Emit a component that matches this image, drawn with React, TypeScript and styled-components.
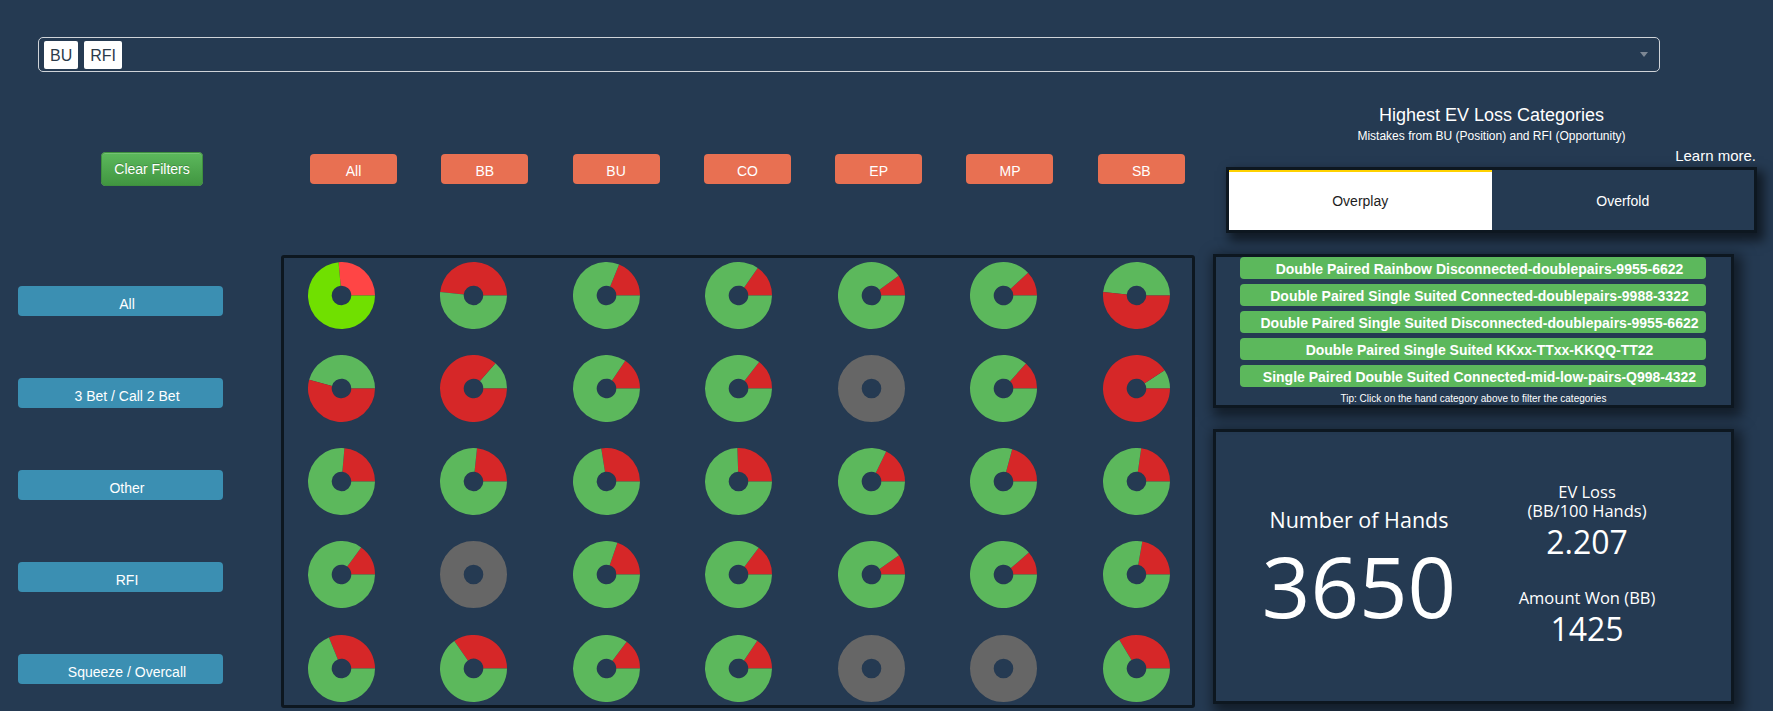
import React from "react";
import styled, { createGlobalStyle } from "styled-components";

const RED = "#d62728";
const GREEN = "#5cb85c";
const GRAY = "#666666";
const LIGHT_RED = "#ff4545";
const LIME = "#70e000";

type Pie = { kind: "r" | "g" | "x" | "l"; t: number };

// t = angle (deg, counter-clockwise from 3 o'clock) where the first slice ends
const pies: Pie[][] = [
  [{ kind: "l", t: 95 }, { kind: "r", t: 174 }, { kind: "r", t: 68 }, { kind: "r", t: 55 }, { kind: "r", t: 36 }, { kind: "r", t: 43 }, { kind: "g", t: 174 }],
  [{ kind: "g", t: 165 }, { kind: "g", t: 49 }, { kind: "r", t: 56 }, { kind: "r", t: 52 }, { kind: "x", t: 0 }, { kind: "r", t: 48 }, { kind: "g", t: 33 }],
  [{ kind: "r", t: 85 }, { kind: "r", t: 84 }, { kind: "r", t: 99 }, { kind: "r", t: 92 }, { kind: "r", t: 64 }, { kind: "r", t: 75 }, { kind: "r", t: 82 }],
  [{ kind: "r", t: 54 }, { kind: "x", t: 0 }, { kind: "r", t: 71 }, { kind: "r", t: 53 }, { kind: "r", t: 35 }, { kind: "r", t: 41 }, { kind: "r", t: 80 }],
  [{ kind: "r", t: 112 }, { kind: "r", t: 125 }, { kind: "r", t: 53 }, { kind: "r", t: 56 }, { kind: "x", t: 0 }, { kind: "x", t: 0 }, { kind: "r", t: 121 }],
];

const positions = ["All", "BB", "BU", "CO", "EP", "MP", "SB"];
const actions = ["All", "3 Bet / Call 2 Bet", "Other", "RFI", "Squeeze / Overcall"];
const categories = [
  "Double Paired Rainbow Disconnected-doublepairs-9955-6622",
  "Double Paired Single Suited Connected-doublepairs-9988-3322",
  "Double Paired Single Suited Disconnected-doublepairs-9955-6622",
  "Double Paired Single Suited KKxx-TTxx-KKQQ-TT22",
  "Single Paired Double Suited Connected-mid-low-pairs-Q998-4322",
];

const GlobalStyle = createGlobalStyle`
  html, body {
    margin: 0;
    padding: 0;
    background: #253a52;
  }
  body {
    font-family: "Liberation Sans", Arial, sans-serif;
    color: #fff;
  }
  * {
    box-sizing: border-box;
  }
`;

const Page = styled.div`
  width: 1773px;
  height: 711px;
  padding-top: 37px;
  overflow: hidden;
`;

const SelectBox = styled.div`
  margin-left: 38px;
  width: 1622px;
  height: 35px;
  border: 1px solid #cfd3d8;
  border-radius: 5px;
  display: flex;
  align-items: center;
  gap: 6px;
  padding-left: 5px;
`;

const Tag = styled.span`
  height: 28px;
  padding: 0 6px;
  background: #fff;
  color: #2b3a4a;
  border-radius: 2px;
  font-size: 16px;
  line-height: 29px;
`;

const Caret = styled.span`
  margin-left: auto;
  margin-right: 11px;
  width: 0;
  height: 0;
  border-left: 4px solid transparent;
  border-right: 4px solid transparent;
  border-top: 5px solid #7d8794;
`;

const Main = styled.div`
  display: flex;
  margin-top: 32px;
`;

const LeftPane = styled.div`
  display: grid;
  grid-template-columns: 281px 914px;
  grid-template-rows: 34px auto;
  row-gap: 69px;
  padding-top: 48px;
`;

const ClearButton = styled.button`
  margin-left: 101px;
  width: 102px;
  height: 34px;
  border: 1px solid #3e8f3e;
  border-radius: 4px;
  background-image: linear-gradient(to bottom, #5cb85c 0%, #419641 100%);
  box-shadow: inset 0 1px 0 rgba(255, 255, 255, 0.15);
  text-shadow: 0 -1px 0 rgba(0, 0, 0, 0.2);
  color: #fff;
  font-family: "Liberation Sans", Arial, sans-serif;
  font-size: 14px;
  padding: 0;
`;

const ColumnBar = styled.div`
  display: grid;
  grid-template-columns: repeat(7, 87px);
  column-gap: 44.3px;
  align-items: center;
  padding-left: 29px;
`;

const ColumnButton = styled.button`
  height: 30px;
  border: none;
  border-radius: 4px;
  background: #e87052;
  color: #fff;
  font-family: "Liberation Sans", Arial, sans-serif;
  font-size: 14px;
  padding: 4px 0 0;
`;

const RowLabels = styled.div`
  display: flex;
  flex-direction: column;
  gap: 62px;
  padding: 31px 0 0 18px;
`;

const RowButton = styled.button`
  width: 205px;
  height: 30px;
  border: none;
  border-radius: 4px;
  background: #3b8fb2;
  color: #fff;
  font-family: "Liberation Sans", Arial, sans-serif;
  font-size: 14px;
  padding: 5px 0 0 13px;
`;

const PiePanel = styled.div`
  width: 914px;
  height: 453px;
  border: 3px solid #0d1720;
  border-radius: 3px;
  padding: 4px 22.5px 3px 23.5px;
  display: grid;
  grid-template-columns: repeat(7, 67px);
  grid-auto-rows: 67px;
  justify-content: space-between;
  row-gap: 26.15px;
`;

const RightPane = styled.div`
  margin-left: 18px;
  width: 548px;
  display: flex;
  flex-direction: column;
`;

const Heading = styled.div`
  margin-left: 13px;
  width: 531px;
  text-align: center;
  font-size: 18px;
  line-height: 22px;
`;

const SubHeading = styled.div`
  margin: 2px 0 0 13px;
  width: 531px;
  text-align: center;
  font-size: 12px;
  line-height: 16px;
`;

const LearnMore = styled.div`
  margin-top: 3px;
  padding-right: 5px;
  text-align: right;
  font-size: 15px;
  line-height: 18px;
`;

const TabBox = styled.div`
  margin: 2px 0 0 13px;
  width: 531px;
  height: 66px;
  border: 3px solid #0d1720;
  display: flex;
  box-shadow: 5px 6px 10px 2px rgba(0, 0, 0, 0.55);
`;

const Tab = styled.div<{ $active?: boolean }>`
  flex: 1;
  display: flex;
  align-items: center;
  justify-content: center;
  font-size: 14px;
  background: ${p => (p.$active ? "#fff" : "transparent")};
  color: ${p => (p.$active ? "#1d1d1d" : "#fff")};
  border-top: 2px solid ${p => (p.$active ? "#ffd200" : "transparent")};
`;

const Panel = styled.div`
  margin-top: 21px;
  width: 521px;
  border: 3px solid #0d1720;
  box-shadow: 4px 5px 12px 4px rgba(0, 0, 0, 0.5);
`;

const CategoryBox = styled(Panel)`
  height: 154px;
  padding-left: 23.5px;
  display: flex;
  flex-direction: column;
  gap: 5px;
`;

const CategoryButton = styled.div`
  width: 466px;
  height: 22px;
  border-radius: 4px;
  background: #5cb85c;
  color: #fff;
  font-weight: bold;
  font-size: 14px;
  line-height: 24px;
  padding-left: 14px;
  text-align: center;
  white-space: nowrap;
`;

const Tip = styled.div`
  margin: 1px 0 0 -23.5px;
  font-size: 10px;
  line-height: 12px;
  text-align: center;
`;

const StatsBox = styled(Panel)`
  height: 275px;
  display: grid;
  grid-template-columns: 286px 170px;
  align-items: center;
  font-family: "Open Sans", "DejaVu Sans", sans-serif;
  text-align: center;
`;

const StatColumn = styled.div`
  display: flex;
  flex-direction: column;
`;

const StatLabel = styled.div<{ $big?: boolean; $gap?: number }>`
  font-size: ${p => (p.$big ? "21.5px" : "16.5px")};
  line-height: ${p => (p.$big ? "30px" : "19px")};
  margin-top: ${p => p.$gap ?? 0}px;
`;

const StatValue = styled.div<{ $big?: boolean }>`
  font-size: ${p => (p.$big ? "85px" : "32px")};
  line-height: ${p => (p.$big ? "85px" : "44px")};
  margin-top: ${p => (p.$big ? "8px" : "0")};
`;

function slicePath(a0: number, a1: number, R: number, r: number, c: number) {
  const rad = (a: number) => (a * Math.PI) / 180;
  const pt = (rr: number, a: number) =>
    `${(c + rr * Math.cos(rad(a))).toFixed(3)} ${(c - rr * Math.sin(rad(a))).toFixed(3)}`;
  const large = a1 - a0 > 180 ? 1 : 0;
  return `M ${pt(R, a0)} A ${R} ${R} 0 ${large} 0 ${pt(R, a1)} L ${pt(r, a1)} A ${r} ${r} 0 ${large} 1 ${pt(r, a0)} Z`;
}

function Donut({ pie }: { pie: Pie }) {
  const R = 33.5;
  const r = 9.8;
  const c = 33.5;
  if (pie.kind === "x") {
    return (
      <svg width="67" height="67" viewBox="0 0 67 67">
        <circle cx={c} cy={c} r={(R + r) / 2} fill="none" stroke={GRAY} strokeWidth={R - r} />
      </svg>
    );
  }
  const first = pie.kind === "r" ? RED : pie.kind === "g" ? GREEN : LIGHT_RED;
  const rest = pie.kind === "r" ? GREEN : pie.kind === "g" ? RED : LIME;
  return (
    <svg width="67" height="67" viewBox="0 0 67 67">
      <path d={slicePath(0, pie.t, R, r, c)} fill={first} />
      <path d={slicePath(pie.t, 360, R, r, c)} fill={rest} />
    </svg>
  );
}

export default function App() {
  return (
    <Page>
      <GlobalStyle />
      <SelectBox>
        <Tag>BU</Tag>
        <Tag>RFI</Tag>
        <Caret />
      </SelectBox>
      <Main>
        <LeftPane>
          <div>
            <ClearButton>Clear Filters</ClearButton>
          </div>
          <ColumnBar>
            {positions.map(p => (
              <ColumnButton key={p}>{p}</ColumnButton>
            ))}
          </ColumnBar>
          <RowLabels>
            {actions.map(a => (
              <RowButton key={a}>{a}</RowButton>
            ))}
          </RowLabels>
          <PiePanel>
            {pies.map((row, i) =>
              row.map((pie, j) => <Donut key={`${i}-${j}`} pie={pie} />),
            )}
          </PiePanel>
        </LeftPane>
        <RightPane>
          <Heading>Highest EV Loss Categories</Heading>
          <SubHeading>Mistakes from BU (Position) and RFI (Opportunity)</SubHeading>
          <LearnMore>Learn more.</LearnMore>
          <TabBox>
            <Tab $active>Overplay</Tab>
            <Tab>Overfold</Tab>
          </TabBox>
          <CategoryBox>
            {categories.map(c => (
              <CategoryButton key={c}>{c}</CategoryButton>
            ))}
            <Tip>Tip: Click on the hand category above to filter the categories</Tip>
          </CategoryBox>
          <StatsBox>
            <StatColumn>
              <StatLabel $big>Number of Hands</StatLabel>
              <StatValue $big>3650</StatValue>
            </StatColumn>
            <StatColumn>
              <StatLabel>EV Loss</StatLabel>
              <StatLabel>(BB/100 Hands)</StatLabel>
              <StatValue>2.207</StatValue>
              <StatLabel $gap={24}>Amount Won (BB)</StatLabel>
              <StatValue>1425</StatValue>
            </StatColumn>
          </StatsBox>
        </RightPane>
      </Main>
    </Page>
  );
}
